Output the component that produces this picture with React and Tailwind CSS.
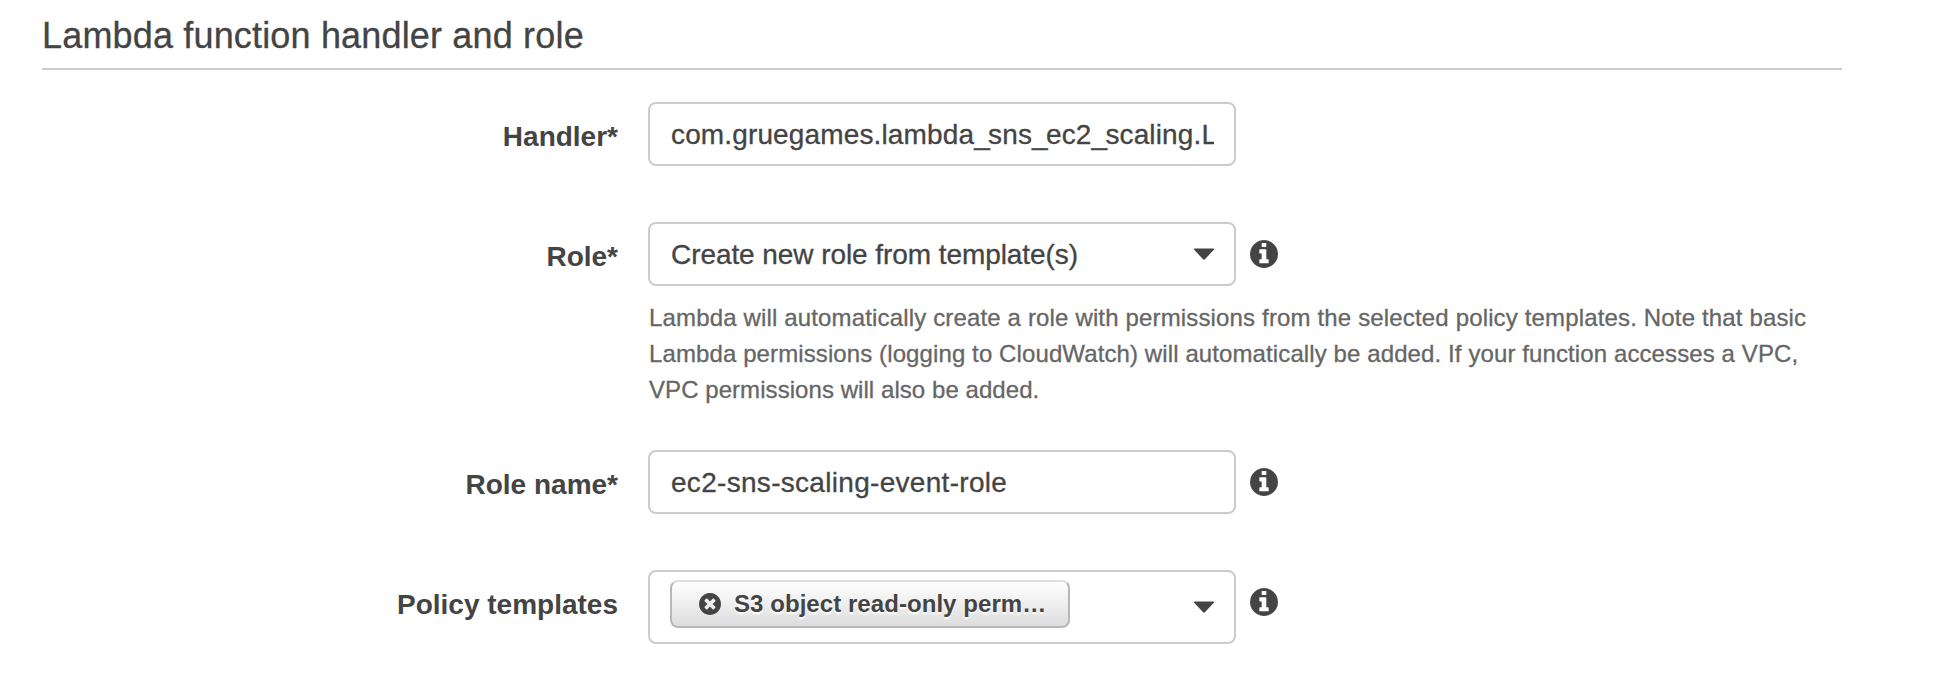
function InfoIcon() {
  return (
    <svg className="size-7 shrink-0" viewBox="128 128 1536 1536" fill="currentColor" aria-hidden="true">
      <path d="M1152 1376v-160q0-14-9-23t-23-9h-96v-512q0-14-9-23t-23-9h-320q-14 0-23 9t-9 23v160q0 14 9 23t23 9h96v320h-96q-14 0-23 9t-9 23v160q0 14 9 23t23 9h448q14 0 23-9t9-23zm-128-896v-160q0-14-9-23t-23-9h-192q-14 0-23 9t-9 23v160q0 14 9 23t23 9h192q14 0 23-9t9-23zm640 416q0 209-103 385.5t-279.5 279.5-385.5 103-385.5-103-279.5-279.5-103-385.5 103-385.5 279.5-279.5 385.5-103 385.5 103 279.5 279.5 103 385.5z" />
    </svg>
  );
}

function RemoveIcon() {
  return (
    <svg className="size-[22px] shrink-0" viewBox="128 128 1536 1536" fill="currentColor" aria-hidden="true">
      <path d="M1277 1122q0-26-19-45l-181-181 181-181q19-19 19-45 0-27-19-46l-90-90q-19-19-46-19-26 0-45 19l-181 181-181-181q-19-19-45-19-27 0-46 19l-90 90q-19 19-19 46 0 26 19 45l181 181-181 181q-19 19-19 45 0 27 19 46l90 90q19 19 46 19 26 0 45-19l181-181 181 181q19 19 45 19 27 0 46-19l90-90q19-19 19-46zm387-226q0 209-103 385.5t-279.5 279.5-385.5 103-385.5-103-279.5-279.5-103-385.5 103-385.5 279.5-279.5 385.5-103 385.5 103 279.5 279.5 103 385.5z" />
    </svg>
  );
}

function Caret() {
  return (
    <svg className="h-3 w-5 shrink-0" viewBox="0 0 20 12" fill="currentColor" aria-hidden="true">
      <path d="M.6 .6h18.8q.6 0 .6.6 0 .5-.4.9l-8.7 9.2q-.9.8-1.8 0L.4 2.1Q0 1.7 0 1.2 0 .6.6.6z" />
    </svg>
  );
}

function Row({ label, className, children }) {
  return (
    <div className={`flex items-start ${className}`}>
      <div className="w-[618px] shrink-0 pt-[19px] text-right text-[28px] leading-8 font-bold">{label}</div>
      <div className="ml-[30px]">{children}</div>
    </div>
  );
}

function Underscore() {
  return <span className="tracking-[-1.7px]">_</span>;
}

const box = "flex w-[588px] items-center rounded-lg border-2 border-[#ccc] bg-white px-5";
const regular = "whitespace-nowrap [-webkit-text-stroke:0.3px_currentColor]";

export default function App() {
  return (
    <main className="h-[676px] overflow-hidden bg-white font-['Liberation_Sans',Arial,sans-serif] text-[#444]">
      <h2 className={`ml-[42px] h-[70px] w-[1800px] border-b-2 border-[#ccc] pt-4 text-[36px] leading-10 tracking-[0.17px] ${regular}`}>
        Lambda function handler and role
      </h2>

      <Row label="Handler*" className="mt-8">
        <div className={`${box} h-16 text-[28px]`}>
          <span className={`mt-0.5 overflow-hidden pl-px leading-8 tracking-[0.14px] ${regular}`}>
            com.gruegames.lambda<Underscore />sns<Underscore />ec2<Underscore />scaling.L
          </span>
        </div>
      </Row>

      <Row label="Role*" className="mt-14">
        <div className="flex items-center gap-3.5">
          <div className={`${box} h-16 justify-between text-[28px]`}>
            <span className={`mt-0.5 pl-px leading-8 tracking-[-0.07px] ${regular}`}>Create new role from template(s)</span>
            <Caret />
          </div>
          <InfoIcon />
        </div>
        <p className={`mt-3.5 pl-px text-[24px] leading-9 text-[#666] ${regular}`}>
          <span className="block tracking-[0.155px]">
            Lambda will automatically create a role with permissions from the selected policy templates. Note that basic
          </span>
          <span className="block tracking-[0.105px]">
            Lambda permissions (logging to CloudWatch) will automatically be added. If your function accesses a VPC,
          </span>
          <span className="block tracking-[0.06px]">VPC permissions will also be added.</span>
        </p>
      </Row>

      <Row label="Role name*" className="mt-[42px]">
        <div className="flex items-center gap-3.5">
          <div className={`${box} h-16 text-[28px]`}>
            <span className={`mt-0.5 pl-px leading-8 tracking-[0.3px] ${regular}`}>ec2-sns-scaling-event-role</span>
          </div>
          <InfoIcon />
        </div>
      </Row>

      <Row label="Policy templates" className="mt-14">
        <div className="flex items-start gap-3.5">
          <div className={`${box} h-[74px] justify-between`}>
            <div className="mb-[6px] flex h-12 w-[400px] items-center rounded-lg border-2 border-[#b7b7b7] border-t-[#ddd] bg-linear-to-b from-white to-[#ddd] pl-[27px] text-[24px] font-bold [text-shadow:0_2px_2px_#fff]">
              <RemoveIcon />
              <span className="ml-[13px] leading-7 tracking-[0.06px] whitespace-nowrap">S3 object read-only perm…</span>
            </div>
            <Caret />
          </div>
          <div className="pt-[18px]">
            <InfoIcon />
          </div>
        </div>
      </Row>
    </main>
  );
}
